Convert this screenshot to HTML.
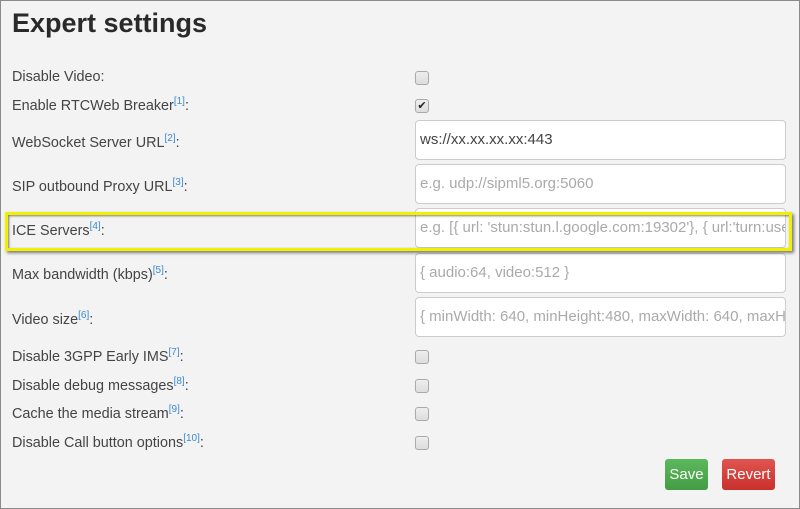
<!DOCTYPE html>
<html><head><style>
body{margin:0;width:800px;height:509px;overflow:hidden;background:#f3f3f3;font-family:"Liberation Sans",sans-serif;position:relative}
.frame{position:absolute;left:0;top:0;width:798px;height:507px;border:1px solid #8a8a8a}
h1{position:absolute;left:12px;top:8px;margin:0;font-size:27px;font-weight:bold;color:#2a2a2a}
.l{position:absolute;left:12px;font-size:14.4px;color:#444;white-space:nowrap}
.l sup{color:#3a8ad0;font-size:10px}
.cb{position:absolute;left:415px;width:12px;height:12px;border:1px solid #aaa;border-radius:3px;background:linear-gradient(#eee,#ddd)}
.in{position:absolute;left:415px;width:365px;height:38px;border:1px solid #ccc;border-radius:4px;background:#fff;font-size:15px;color:#aaa;line-height:38px;padding-left:4px;white-space:nowrap;overflow:hidden}
.btn{position:absolute;top:459px;height:31px;line-height:31px;color:#fff;font-size:15px;text-align:center;border-radius:3px}
</style></head><body>
<div class="frame"></div>
<h1>Expert settings</h1>
<div class="l" style="top:69px">Disable Video:</div>
<div class="l" style="top:96px">Enable RTCWeb Breaker<sup>[1]</sup>:</div>
<div class="l" style="top:133px">WebSocket Server URL<sup>[2]</sup>:</div>
<div class="l" style="top:177px">SIP outbound Proxy URL<sup>[3]</sup>:</div>
<div class="l" style="top:221px">ICE Servers<sup>[4]</sup>:</div>
<div class="l" style="top:265px">Max bandwidth (kbps)<sup>[5]</sup>:</div>
<div class="l" style="top:310px">Video size<sup>[6]</sup>:</div>
<div class="l" style="top:347px">Disable 3GPP Early IMS<sup>[7]</sup>:</div>
<div class="l" style="top:376px">Disable debug messages<sup>[8]</sup>:</div>
<div class="l" style="top:404px">Cache the media stream<sup>[9]</sup>:</div>
<div class="l" style="top:433px">Disable Call button options<sup>[10]</sup>:</div>
<div class="cb" style="top:71px"></div>
<div class="cb" style="top:99px;font-size:11px;line-height:12px;text-align:center;color:#222">✔</div>
<div class="in" style="top:120px;color:#444">ws://xx.xx.xx.xx:443</div>
<div class="in" style="top:164px">e.g. udp://sipml5.org:5060</div>
<div class="in" style="top:208px">e.g. [{ url: 'stun:stun.l.google.com:19302'}, { url:'turn:user@numb.viagenie.ca'</div>
<div class="in" style="top:253px">{ audio:64, video:512 }</div>
<div class="in" style="top:297px">{ minWidth: 640, minHeight:480, maxWidth: 640, maxHeight:480 }</div>
<div style="position:absolute;left:5px;top:212px;width:781px;height:33px;border:3px solid #f0f000;box-shadow:2px 2px 3px rgba(0,0,0,.5),inset 1px 1px 2px rgba(0,0,0,.5)"></div>
<div class="cb" style="top:350px"></div>
<div class="cb" style="top:379px"></div>
<div class="cb" style="top:407px"></div>
<div class="cb" style="top:436px"></div>
<div class="btn" style="left:665px;width:43px;background:linear-gradient(#5cb85c,#449d44)">Save</div>
<div class="btn" style="left:722px;width:53px;background:linear-gradient(#e05550,#c9302c)">Revert</div>
</body></html>
